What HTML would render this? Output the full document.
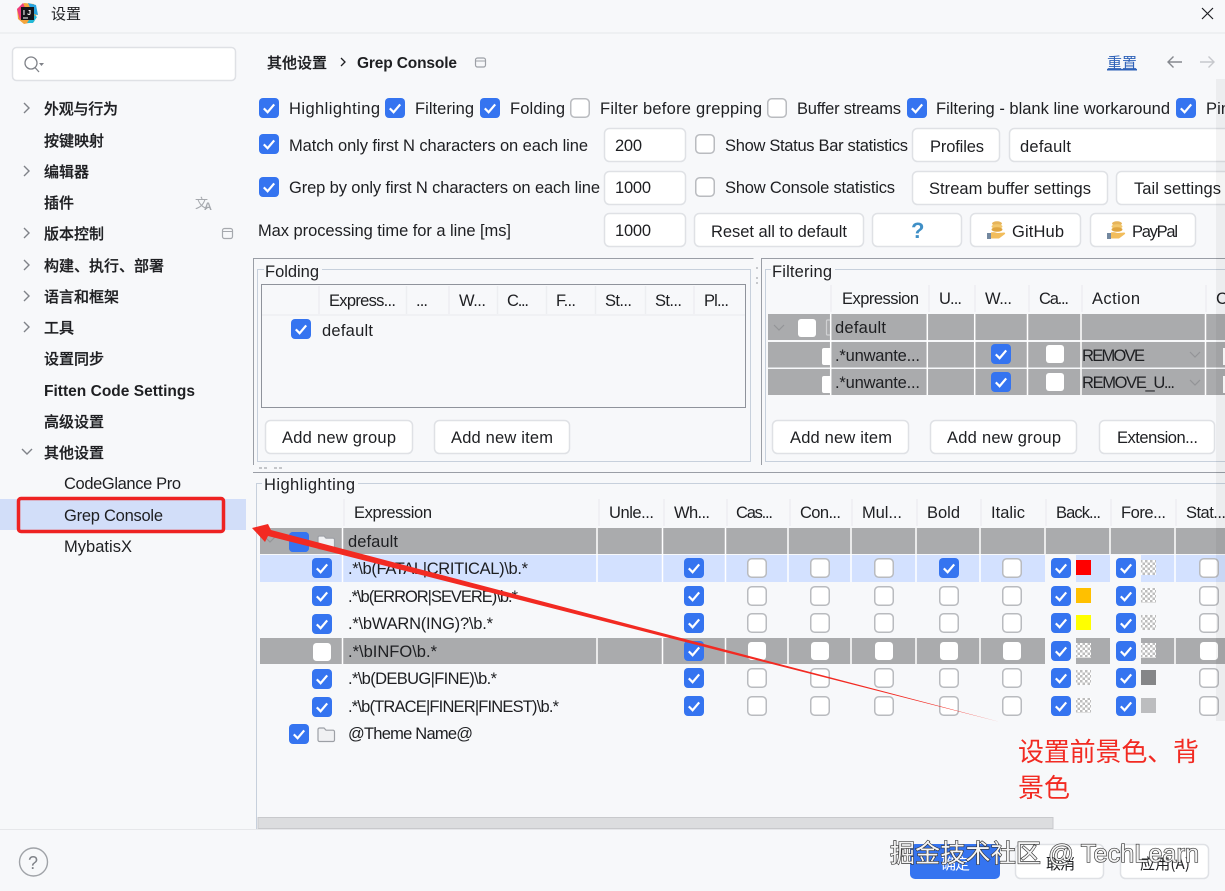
<!DOCTYPE html>
<html lang="zh"><head><meta charset="utf-8"><title>设置</title>
<style>
html,body{margin:0;padding:0;background:#f7f8fa;width:1225px;height:891px;overflow:hidden}
svg{display:block}
text{font-family:"Liberation Sans","Noto Sans CJK SC",sans-serif;font-size:16.5px;fill:#1e1f22}
.z{font-family:"Noto Sans CJK SC","Liberation Sans",sans-serif;font-size:15px}
.s{font-weight:500;stroke:#1e1f22;stroke-width:.25}
.b{fill:#fff;stroke:#dfe1e5;stroke-width:1.5}
.sep{stroke:#fff;stroke-width:1.5}
.hs{stroke:#edeef1;stroke-width:1.5}
.ch{fill:none;stroke:#7f8288;stroke-width:1.4}
</style></head><body>
<svg width="1225" height="891" viewBox="0 0 1225 891" xmlns="http://www.w3.org/2000/svg">
<defs>
<pattern id="ck" width="5" height="5" patternUnits="userSpaceOnUse"><rect width="5" height="5" fill="#fff"/><rect width="2.5" height="2.5" fill="#bdbdbd"/><rect x="2.5" y="2.5" width="2.5" height="2.5" fill="#bdbdbd"/></pattern>
<g id="c"><rect width="20" height="20" rx="4" fill="#3574f0"/><path d="M4.8 10.4L8.6 14.2L15.2 6.4" fill="none" stroke="#fff" stroke-width="2.2"/></g>
<g id="u"><rect x=".75" y=".75" width="18.5" height="18.5" rx="4" fill="#fff" stroke="#b9bbbf" stroke-width="1.5"/></g>
<g id="w"><rect x="1" y="1" width="18" height="18" rx="3.5" fill="#fff"/></g>
<g id="f"><path d="M1 3.5a1.5 1.5 0 0 1 1.5-1.5H7l2 2.2h7a1.5 1.5 0 0 1 1.5 1.5v8.3a1.5 1.5 0 0 1-1.5 1.5H2.500A1.5 1.5 0 0 1 1 14z" fill="#f0f1f3" stroke="#9da0a6" stroke-width="1.2"/></g>
<g id="coin"><ellipse cx="10" cy="2.500" rx="5" ry="2.200" fill="#e6b45a"/><ellipse cx="10" cy="5.500" rx="5.500" ry="2.300" fill="#f2c76c"/><ellipse cx="10" cy="8.500" rx="5.500" ry="2.300" fill="#dfa540"/><path d="M4 11.500c3-1 5 .5 7 .5l6-.5c1.500 0 1.500 1.500 0 2.200l-5 3.800H4z" fill="#f2bd5c"/><rect x="0" y="12" width="4" height="6" fill="#73889f"/></g>
</defs>

<rect width="1225" height="891" fill="#f7f8fa"/>
<!-- title bar -->
<path d="M17 9L24 3 34 4 37 13 34 22 24 24 18 19z" fill="#f4a43a"/>
<path d="M17 9L23 3 26 10 20 20z" fill="#ee3d7c"/>
<path d="M28 3L36 5 38 15 33 14z" fill="#27a4e0"/>
<path d="M33 14L37 17 33 23 27 23z" fill="#23b9d8"/>
<rect x="21" y="7" width="13" height="13" fill="#15151a"/>
<text x="23" y="15" style="font-size:7px;font-weight:700;fill:#fff" textLength="8">IJ</text>
<rect x="23" y="17.500" width="5" height="1" fill="#fff"/>
<text class="z" x="51" y="19" textLength="30">设置</text>
<path d="M1202 8L1213 19M1213 8L1202 19" stroke="#1e1f22" stroke-width="1.2" fill="none"/>
<line x1="0" y1="33" x2="1225" y2="33" stroke="#e6e7ea"/>

<!-- sidebar -->
<rect x="12.500" y="47.500" width="223" height="33" rx="4" fill="#fff" stroke="#dfe1e5" stroke-width="1.5"/>
<circle cx="31" cy="63" r="6" fill="none" stroke="#7f8288" stroke-width="1.3"/>
<path d="M35 67.500L39 72" stroke="#7f8288" stroke-width="1.3"/>
<path d="M39 63h5l-2.500 3z" fill="#7f8288"/>
<path class="ch" d="M24 103l5 5-5 5M24 166l5 5-5 5M24 228l5 5-5 5M24 260l5 5-5 5M24 291l5 5-5 5M24 322l5 5-5 5M22 449l5 5 5-5"/>
<text class="z s" x="44" y="114" textLength="74">外观与行为</text>
<text class="z s" x="44" y="146" textLength="60">按键映射</text>
<text class="z s" x="44" y="177" textLength="45">编辑器</text>
<text class="z s" x="44" y="208" textLength="30">插件</text>
<text class="z s" x="44" y="239" textLength="60">版本控制</text>
<text class="z s" x="44" y="271" textLength="120">构建、执行、部署</text>
<text class="z s" x="44" y="302" textLength="75">语言和框架</text>
<text class="z s" x="44" y="333" textLength="30">工具</text>
<text class="z s" x="44" y="364" textLength="60">设置同步</text>
<text x="44" y="396" textLength="151" style="font-weight:700;font-size:15.5px">Fitten Code Settings</text>
<text class="z s" x="44" y="427" textLength="60">高级设置</text>
<text class="z s" x="44" y="458" textLength="60">其他设置</text>
<text x="195" y="208" style="font-size:13px;fill:#a6a9ae;font-family:'Noto Sans CJK SC',sans-serif">文</text>
<text x="204" y="210" style="font-size:11px;font-weight:700;fill:#a6a9ae">A</text>
<rect x="222.500" y="228.500" width="10" height="10" rx="2" fill="none" stroke="#a6a9ae" stroke-width="1.2"/><line x1="222.500" y1="231.500" x2="232.500" y2="231.500" stroke="#a6a9ae"/>
<text x="64" y="489" textLength="117">CodeGlance Pro</text>
<rect x="0" y="499" width="246" height="31" fill="#d2def9"/>
<text x="64" y="521" textLength="99">Grep Console</text>
<text x="64" y="552" textLength="68">MybatisX</text>
<rect x="18.500" y="498.500" width="205" height="33" rx="2.500" fill="none" stroke="#ee2222" stroke-width="3.500"/>

<!-- breadcrumb -->
<text class="z s" x="267" y="68" textLength="60">其他设置</text>
<path d="M341 58l4 4-4 4" fill="none" stroke="#1e1f22" stroke-width="1.3"/>
<text x="357" y="68" textLength="100" style="font-weight:700;font-size:15.5px">Grep Console</text>
<rect x="475.500" y="58" width="10" height="9" rx="2" fill="none" stroke="#9da0a6" stroke-width="1.2"/><line x1="475.500" y1="61" x2="485.500" y2="61" stroke="#9da0a6"/>
<text class="z" x="1107" y="68" textLength="30" style="fill:#2f62b8;text-decoration:underline">重置</text>
<path d="M1182 62h-14m5.500-5.500l-5.500 5.500 5.500 5.500" fill="none" stroke="#85888e" stroke-width="1.4"/>
<path d="M1200 62h14m-5.500-5.500l5.500 5.500-5.500 5.500" fill="none" stroke="#c6c8cc" stroke-width="1.4"/>

<!-- option rows -->
<use href="#c" x="259" y="98"/><text x="289" y="114" textLength="91">Highlighting</text>
<use href="#c" x="385" y="98"/><text x="415" y="114" textLength="59">Filtering</text>
<use href="#c" x="480" y="98"/><text x="510" y="114" textLength="55">Folding</text>
<use href="#u" x="570" y="98"/><text x="600" y="114" textLength="162">Filter before grepping</text>
<use href="#u" x="767" y="98"/><text x="797" y="114" textLength="104">Buffer streams</text>
<use href="#c" x="907" y="98"/><text x="936" y="114" textLength="234">Filtering - blank line workaround</text>
<use href="#c" x="1176" y="98"/><text x="1206" y="114" textLength="24">Pin</text>

<use href="#c" x="259" y="134"/><text x="289" y="151" textLength="299">Match only first N characters on each line</text>
<rect class="b" x="604.500" y="128.500" width="81" height="33" rx="5"/><text x="615" y="151" textLength="27">200</text>
<use href="#u" x="695" y="134"/><text x="725" y="151" textLength="183">Show Status Bar statistics</text>
<rect class="b" x="912.500" y="128.500" width="87" height="33" rx="5"/><text x="930" y="152" textLength="54">Profiles</text>
<rect class="b" x="1009.500" y="128.500" width="230" height="33" rx="5"/><text x="1020" y="152" textLength="51">default</text>

<use href="#c" x="259" y="177"/><text x="289" y="193" textLength="311">Grep by only first N characters on each line</text>
<rect class="b" x="604.500" y="171.500" width="81" height="33" rx="5"/><text x="615" y="193" textLength="36">1000</text>
<use href="#u" x="695" y="177"/><text x="725" y="193" textLength="170">Show Console statistics</text>
<rect class="b" x="912.500" y="171.500" width="195" height="33" rx="5"/><text x="929" y="194" textLength="162">Stream buffer settings</text>
<rect class="b" x="1116.500" y="171.500" width="130" height="33" rx="5"/><text x="1134" y="194" textLength="87">Tail settings</text>

<text x="258" y="236" textLength="253">Max processing time for a line [ms]</text>
<rect class="b" x="604.500" y="213.500" width="81" height="33" rx="5"/><text x="615" y="236" textLength="36">1000</text>
<rect class="b" x="694.500" y="213.500" width="169" height="33" rx="5"/><text x="711" y="237" textLength="136">Reset all to default</text>
<rect class="b" x="872.500" y="213.500" width="89" height="33" rx="5"/><text x="911" y="238" style="font-size:22px;font-weight:700;fill:#3f8fc6">?</text>
<rect class="b" x="970.500" y="213.500" width="110" height="33" rx="5"/><use href="#coin" x="987" y="221"/><text x="1012" y="237" textLength="52">GitHub</text>
<rect class="b" x="1090.500" y="213.500" width="105" height="33" rx="5"/><use href="#coin" x="1107" y="221"/><text x="1132" y="237" textLength="46">PayPal</text>

<!-- folding panel -->
<path d="M253.500 465V258.500H753.500" fill="none" stroke="#9a9ea6"/>
<path d="M264 269.500H257.500V461.500H750.500V269.500H322" fill="none" stroke="#c7d0dc"/>
<text x="265" y="277" textLength="54">Folding</text>
<rect x="261.500" y="284.500" width="484" height="123" fill="none" stroke="#8f939b"/>
<line x1="262" y1="315" x2="745" y2="315" stroke="#e8eaed"/>
<path class="hs" d="M319 286V314M406.500 286V314M449 286V314M497.500 286V314M546.500 286V314M595.500 286V314M645.500 286V314M694 286V314"/>
<text x="329" y="306" textLength="67">Express...</text>
<text x="416" y="306" textLength="12">...</text>
<text x="459" y="306" textLength="27">W...</text>
<text x="507" y="306" textLength="22">C...</text>
<text x="556" y="306" textLength="20">F...</text>
<text x="605" y="306" textLength="27">St...</text>
<text x="655" y="306" textLength="27">St...</text>
<text x="704" y="306" textLength="25">Pl...</text>
<use href="#c" x="291" y="319"/><text x="322" y="336" textLength="51">default</text>
<rect class="b" x="265.500" y="420.500" width="147" height="33" rx="5"/><text x="282" y="443" textLength="114">Add new group</text>
<rect class="b" x="434.500" y="420.500" width="135" height="33" rx="5"/><text x="451" y="443" textLength="102">Add new item</text>

<!-- splitter grip -->
<path d="M757 267v2M757 277v2M757 282v2" stroke="#a6a9ae" stroke-width="1.2"/>
<path d="M259 468h3M264 468h3M274 468h3M279 468h3" stroke="#a6a9ae" stroke-width="1.2"/>

<!-- filtering panel -->
<path d="M761.500 465V258.500H1225" fill="none" stroke="#9a9ea6"/>
<path d="M771 269.500H765.500V461.500H1225M835 269.500H1225" fill="none" stroke="#c7d0dc"/>
<text x="772" y="277" textLength="60">Filtering</text>
<path class="hs" d="M831 285V312M929 285V312M975 285V312M1029 285V312M1082 285V312M1206 285V312"/>
<text x="842" y="304" textLength="77">Expression</text>
<text x="939" y="304" textLength="23">U...</text>
<text x="985" y="304" textLength="27">W...</text>
<text x="1039" y="304" textLength="30">Ca...</text>
<text x="1092" y="304" textLength="48">Action</text>
<text x="1216" y="304">C</text>
<rect x="768" y="314" width="457" height="26" fill="#aaabad"/>
<rect x="768" y="342" width="457" height="25.500" fill="#aaabad"/>
<rect x="768" y="369" width="457" height="26" fill="#aaabad"/>
<path class="sep" d="M830.700 314V395M927.300 314V395M974.700 314V395M1027.500 314V395M1081 314V395M1205.500 314V395"/>
<path d="M774 325l5 5 5-5" fill="none" stroke="#939497" stroke-width="1.2"/>
<rect x="798" y="319" width="18" height="18" rx="3" fill="#fff"/>
<path d="M830 320h-2.500a1 1 0 0 0-1 1v13a1 1 0 0 0 1 1h2.500" fill="none" stroke="#d0d1d3" stroke-width="1.2"/>
<text x="835" y="333" textLength="51">default</text>
<path d="M830 348h-6a2 2 0 0 0-2 2v13a2 2 0 0 0 2 2h6zM830 376h-6a2 2 0 0 0-2 2v13a2 2 0 0 0 2 2h6z" fill="#fff"/>
<text x="835" y="361" textLength="85">.*unwante...</text>
<text x="835" y="388" textLength="85">.*unwante...</text>
<use href="#c" x="991" y="344"/><use href="#c" x="991" y="372"/>
<rect x="1046" y="345" width="18" height="18" rx="3" fill="#fff"/><rect x="1046" y="373" width="18" height="18" rx="3" fill="#fff"/>
<text x="1082" y="361" textLength="63">REMOVE</text>
<text x="1082" y="388" textLength="93">REMOVE_U...</text>
<path d="M1190 352l5 5 5-5M1190 380l5 5 5-5" fill="none" stroke="#939497" stroke-width="1.2"/>
<rect x="1223" y="348" width="4" height="17" fill="#fff"/><rect x="1223" y="376" width="4" height="17" fill="#fff"/>
<rect class="b" x="772.500" y="420.500" width="136" height="33" rx="5"/><text x="790" y="443" textLength="102">Add new item</text>
<rect class="b" x="930.500" y="420.500" width="146" height="33" rx="5"/><text x="947" y="443" textLength="114">Add new group</text>
<rect class="b" x="1099.500" y="420.500" width="115" height="33" rx="5"/><text x="1117" y="443" textLength="81">Extension...</text>

<!-- highlighting panel -->
<line x1="253" y1="472.500" x2="1225" y2="472.500" stroke="#9a9ea6"/>
<path d="M262 483.500H256.500V829M358 483.500H1225" fill="none" stroke="#c7d0dc"/>
<text x="264" y="490" textLength="91">Highlighting</text>
<path class="hs" d="M344 499V526M599 499V526M664 499V526M727 499V526M790 499V526M852 499V526M917 499V526M981 499V526M1046 499V526M1111 499V526M1176 499V526"/>
<text x="354" y="518" textLength="78">Expression</text>
<text x="609" y="518" textLength="45">Unle...</text>
<text x="674" y="518" textLength="36">Wh...</text>
<text x="736" y="518" textLength="37">Cas...</text>
<text x="800" y="518" textLength="41">Con...</text>
<text x="862" y="518" textLength="40">Mul...</text>
<text x="927" y="518" textLength="33">Bold</text>
<text x="991" y="518" textLength="34">Italic</text>
<text x="1056" y="518" textLength="45">Back...</text>
<text x="1121" y="518" textLength="45">Fore...</text>
<text x="1186" y="518" textLength="40">Stat...</text>

<rect x="260" y="528" width="965" height="26" fill="#aaabad"/>
<rect x="260" y="555" width="965" height="27" fill="#d3e1ff"/>
<rect x="260" y="638" width="965" height="26" fill="#aaabad"/>
<rect x="1045" y="555" width="31" height="27" fill="#f7f8fa"/><rect x="1110" y="555" width="31" height="27" fill="#f7f8fa"/>
<rect x="1045" y="638" width="31" height="26" fill="#f7f8fa"/><rect x="1110" y="638" width="31" height="26" fill="#f7f8fa"/>
<path class="sep" d="M342.500 528V582M597 528V582M662.500 528V582M725.500 528V582M788 528V582M851 528V582M916 528V582M980 528V582M1045 528V554M1110 528V554M1175 528V582M342.500 638V664M597 638V664M662.500 638V664M725.500 638V664M788 638V664M851 638V664M916 638V664M980 638V664M1175 638V664"/>
<path d="M265 537l5 5 5-5" fill="none" stroke="#939497" stroke-width="1.2"/>
<use href="#c" x="289" y="532"/><use href="#f" x="317" y="534"/>
<rect x="289" y="532" width="20" height="20" rx="4" fill="#3574f0"/>
<text x="348" y="547" textLength="50">default</text>

<use href="#c" x="312" y="558"/><text x="348" y="574" textLength="180">.*\b(FATAL|CRITICAL)\b.*</text>
<use href="#c" x="312" y="586"/><text x="348" y="602" textLength="170">.*\b(ERROR|SEVERE)\b.*</text>
<use href="#c" x="312" y="614"/><text x="348" y="629" textLength="145">.*\bWARN(ING)?\b.*</text>
<use href="#w" x="312" y="642"/><text x="348" y="657" textLength="89">.*\bINFO\b.*</text>
<use href="#c" x="312" y="669"/><text x="348" y="684" textLength="149">.*\b(DEBUG|FINE)\b.*</text>
<use href="#c" x="312" y="697"/><text x="348" y="712" textLength="211">.*\b(TRACE|FINER|FINEST)\b.*</text>
<use href="#c" x="289" y="724"/><use href="#f" x="317" y="726"/><text x="348" y="739" textLength="125">@Theme Name@</text>

<!-- Wh column -->
<use href="#c" x="684" y="558"/><use href="#c" x="684" y="586"/><use href="#c" x="684" y="613"/><use href="#c" x="684" y="641"/><use href="#c" x="684" y="668"/><use href="#c" x="684" y="696"/>
<!-- Cas -->
<use href="#u" x="747" y="558"/><use href="#u" x="747" y="586"/><use href="#u" x="747" y="613"/><use href="#w" x="747" y="641"/><use href="#u" x="747" y="668"/><use href="#u" x="747" y="696"/>
<!-- Con -->
<use href="#u" x="810" y="558"/><use href="#u" x="810" y="586"/><use href="#u" x="810" y="613"/><use href="#w" x="810" y="641"/><use href="#u" x="810" y="668"/><use href="#u" x="810" y="696"/>
<!-- Mul -->
<use href="#u" x="874" y="558"/><use href="#u" x="874" y="586"/><use href="#u" x="874" y="613"/><use href="#w" x="874" y="641"/><use href="#u" x="874" y="668"/><use href="#u" x="874" y="696"/>
<!-- Bold -->
<use href="#c" x="939" y="558"/><use href="#u" x="939" y="586"/><use href="#u" x="939" y="613"/><use href="#w" x="939" y="641"/><use href="#u" x="939" y="668"/><use href="#u" x="939" y="696"/>
<!-- Italic -->
<use href="#u" x="1002" y="558"/><use href="#u" x="1002" y="586"/><use href="#u" x="1002" y="613"/><use href="#w" x="1002" y="641"/><use href="#u" x="1002" y="668"/><use href="#u" x="1002" y="696"/>
<!-- Back -->
<use href="#c" x="1051" y="558"/><use href="#c" x="1051" y="586"/><use href="#c" x="1051" y="613"/><use href="#c" x="1051" y="641"/><use href="#c" x="1051" y="668"/><use href="#c" x="1051" y="696"/>
<rect x="1076" y="560" width="15" height="15" fill="#ff0000"/>
<rect x="1076" y="588" width="15" height="15" fill="#ffc000"/>
<rect x="1076" y="615" width="15" height="15" fill="#ffff00"/>
<rect x="1076" y="643" width="15" height="15" fill="url(#ck)"/>
<rect x="1076" y="670" width="15" height="15" fill="url(#ck)"/>
<rect x="1076" y="698" width="15" height="15" fill="url(#ck)"/>
<!-- Fore -->
<use href="#c" x="1116" y="558"/><use href="#c" x="1116" y="586"/><use href="#c" x="1116" y="613"/><use href="#c" x="1116" y="641"/><use href="#c" x="1116" y="668"/><use href="#c" x="1116" y="696"/>
<rect x="1141" y="560" width="15" height="15" fill="url(#ck)"/>
<rect x="1141" y="588" width="15" height="15" fill="url(#ck)"/>
<rect x="1141" y="615" width="15" height="15" fill="url(#ck)"/>
<rect x="1141" y="643" width="15" height="15" fill="url(#ck)"/>
<rect x="1141" y="670" width="15" height="15" fill="#858688"/>
<rect x="1141" y="698" width="15" height="15" fill="#bcbdbf"/>
<!-- Stat -->
<use href="#u" x="1199" y="558"/><use href="#u" x="1199" y="586"/><use href="#u" x="1199" y="613"/><use href="#w" x="1199" y="641"/><use href="#u" x="1199" y="668"/><use href="#u" x="1199" y="696"/>

<!-- right band & h-scroll -->
<rect x="1216" y="79" width="9" height="642" fill="#000" opacity=".045"/>
<rect x="258" y="817.500" width="795" height="11" fill="#dcdddf" stroke="#c8c9cc"/>
<line x1="0" y1="829.500" x2="1225" y2="829.500" stroke="#e6e7ea"/>

<!-- arrow -->
<polygon points="252,528 268,524 271,530 1000,722 268,536 265,542" fill="#f22a22"/>

<!-- annotation -->
<text class="z" x="1018" y="761" textLength="181" style="font-size:26px;fill:#f22a22">设置前景色、背</text>
<text class="z" x="1018" y="797" textLength="52" style="font-size:26px;fill:#f22a22">景色</text>

<!-- footer -->
<circle cx="33.500" cy="862" r="14" fill="none" stroke="#a0a3a8" stroke-width="1.4"/>
<text x="28" y="869" style="font-size:18px;fill:#7f8288">?</text>
<rect x="910" y="844" width="90" height="35" rx="5" fill="#3574f0"/>
<text class="z" x="941" y="869" textLength="29" style="fill:#fff">确定</text>
<rect class="b" x="1015.500" y="844.500" width="88" height="34" rx="5"/>
<text class="z" x="1046" y="869" textLength="29">取消</text>
<rect class="b" x="1120.500" y="844.500" width="88" height="34" rx="5"/>
<text class="z" x="1140" y="869" textLength="50">应用(A)</text>

<!-- watermark -->
<text x="890" y="862" textLength="309" style="font-size:25px;fill:#f4f4f4;stroke:#333;stroke-width:1.300;paint-order:stroke">掘金技术社区 @ TechLearn</text>
</svg>
</body></html>
